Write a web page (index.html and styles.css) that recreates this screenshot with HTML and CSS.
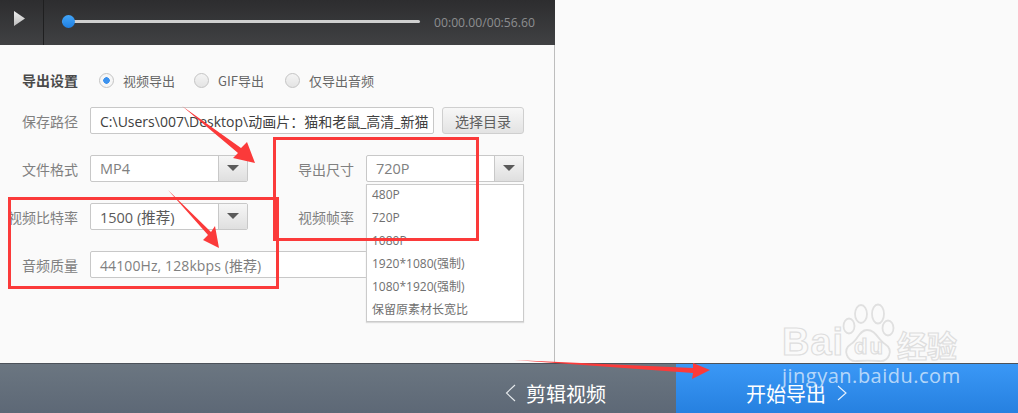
FILE: index.html
```html
<!DOCTYPE html>
<html lang="zh">
<head>
<meta charset="utf-8">
<title>导出设置</title>
<link rel="stylesheet" href="styles.css">
</head>
<body>
<div class="app">
  <div class="main">
    <section class="panel">
      <div class="player">
        <button class="play"><svg width="11" height="15" viewBox="0 0 11 15"><defs><linearGradient id="pg" x1="0" y1="0" x2="0" y2="1"><stop offset="0" stop-color="#eeeeee"/><stop offset="1" stop-color="#bcbcbc"/></linearGradient></defs><path d="M0 0L11 7.500L0 15Z" fill="url(#pg)"/></svg></button>
        <div class="track"><span class="thumb"></span></div>
        <span class="time">00:00.00/00:56.60</span>
      </div>
      <div class="form">
        <div class="row row-head">
          <span class="head">导出设置</span>
          <label class="radio on"><i></i>视频导出</label>
          <label class="radio r2"><i></i>GIF导出</label>
          <label class="radio r3"><i></i>仅导出音频</label>
        </div>
        <div class="row">
          <span class="label">保存路径</span>
          <div class="input path">C:\Users\007\Desktop\动画片：猫和老鼠_高清_新猫</div>
          <button class="browse">选择目录</button>
        </div>
        <div class="row">
          <span class="label">文件格式</span>
          <div class="select short muted"><span>MP4</span><b class="caret"></b></div>
          <span class="label label-r">导出尺寸</span>
          <div class="select right muted"><span>720P</span><b class="caret"></b></div>
        </div>
        <div class="row">
          <span class="label over">视频比特率</span>
          <div class="select short"><span>1500 (推荐)</span><b class="caret"></b></div>
          <span class="label label-r">视频帧率</span>
        </div>
        <div class="row">
          <span class="label">音频质量</span>
          <div class="input audio">44100Hz, 128kbps (推荐)</div>
        </div>
      </div>
    </section>
    <aside class="blank"></aside>
  </div>
  <footer class="bar">
    <div class="back">
      <svg class="chev" width="11" height="18" viewBox="0 0 11 18"><path d="M10 1L1.500 9L10 17" fill="none" stroke="#e8ecef" stroke-width="1.1"/></svg>
      <span>剪辑视频</span>
    </div>
    <div class="start">
      <span>开始导出</span>
      <svg class="chev" width="10" height="16" viewBox="0 0 10 16"><path d="M1 1L9 8L1 15" fill="none" stroke="#e8f2fd" stroke-width="1.1"/></svg>
    </div>
  </footer>

  <ul class="menu">
    <li>480P</li><li>720P</li><li>1080P</li><li>1920*1080(强制)</li><li>1080*1920(强制)</li><li>保留原素材长宽比</li>
  </ul>

  <div class="mark">
    <svg class="paw" width="60" height="60" viewBox="0 0 60 60" fill="#fafafa" stroke="#e0e0e0" stroke-width="1.8">
      <ellipse cx="23" cy="11" rx="6" ry="9"/>
      <ellipse cx="40" cy="11" rx="6" ry="9.500"/>
      <ellipse cx="11" cy="23" rx="5.500" ry="7.500"/>
      <ellipse cx="50" cy="25" rx="5.500" ry="7.500"/>
      <path d="M29 27C21 27 20 37 13 41C4 47 9 59 19 58C25 57.500 34 57.500 41 58C51 59 56 47 47 41C40 37 38 27 29 27Z"/>
    </svg>
    <span class="mk-bai">Bai</span>
    <span class="mk-du">du</span>
    <span class="mk-cn">经验</span>
    <span class="mk-url">jingyan.baidu.com</span>
  </div>

  <div class="redbox box-a"></div>
  <div class="redbox box-b"></div>
  <svg class="arrows" width="1018" height="413" viewBox="0 0 1018 413" fill="#fb3a3a">
    <path d="M182 106L241 148L247 142L255 163L233 158L238 153Z"/>
    <path d="M168 190L211 232L215 226L219 248L203 240L208 235Z"/>
    <path d="M514 360L693 368L693 363L710 370L692 379L693 373Z"/>
  </svg>
</div>
</body>
</html>
```
FILE: styles.css
```css
* { box-sizing: border-box; }
html, body { margin: 0; padding: 0; }
body {
  width: 1018px;
  height: 413px;
  overflow: hidden;
  font-family: "Noto Sans CJK SC", "Open Sans", sans-serif;
  background: #fafafa;
}
.app { position: relative; width: 1018px; height: 413px; display: flex; flex-direction: column; }
.main { display: flex; height: 363px; }
.panel { width: 555px; display: flex; flex-direction: column; background: #fafafa; }
.blank { flex: 1; background: #fafafa; }

.player {
  height: 45px;
  flex: none;
  display: flex;
  align-items: center;
  background: linear-gradient(#2d2d2f, #404143);
}
.play {
  width: 44px;
  height: 45px;
  padding: 0 0 8px 14px;
  border: 0;
  border-right: 1px solid #1f1f20;
  background: none;
  display: flex;
  align-items: center;
  justify-content: flex-start;
}
.track {
  position: relative;
  width: 358px;
  height: 3px;
  margin: 0 0 2px 18px;
  border-radius: 2px;
  background: #cfcfcf;
}
.thumb {
  position: absolute;
  left: 0;
  top: -5px;
  width: 13px;
  height: 13px;
  border-radius: 50%;
  background: linear-gradient(#42a5f8, #1f7fe2);
}
.time {
  margin: 0 0 1px 14px;
  font-family: "Open Sans", sans-serif;
  font-size: 12.200px;
  color: #8d8e90;
  white-space: nowrap;
}

.form { flex: 1; padding: 22px 0 0 22px; border-right: 1px solid #bdbdbd; }
.row { display: flex; align-items: center; height: 27px; margin-bottom: 21px; font-size: 14px; color: #808080; }
.row-head { height: 26px; margin-bottom: 14px; font-size: 13px; }
.head { width: 56px; font-size: 14px; font-weight: 700; color: #4a4a4a; }
.radio { display: flex; align-items: center; margin-left: 21px; color: #666; }
.radio i {
  width: 15px;
  height: 15px;
  margin-right: 9px;
  border: 1px solid #c4c4c4;
  border-radius: 50%;
  background: linear-gradient(#f4f4f4, #e4e4e4);
}
.radio.on i { background: radial-gradient(circle, #3c92ee 0 3px, #f6f6f6 3.500px); }
.r2 { margin-left: 19px; }

.label { width: 56px; flex: none; white-space: nowrap; color: #808080; }
.over { display: flex; justify-content: flex-end; }
.label-r { margin-left: 50px; }
.input, .select {
  height: 27px;
  margin-left: 12px;
  border: 1px solid #c8c8c8;
  border-radius: 2px;
  background: #fff;
  display: flex;
  align-items: center;
  font-family: "Open Sans", "Noto Sans CJK SC", sans-serif;
  color: #5a5a5a;
  white-space: nowrap;
  overflow: hidden;
}
.input { padding-left: 9px; font-size: 14px; }
.path { width: 344px; color: #404040; }
.audio { width: 434px; color: #808080; letter-spacing: 0.100px; }
.browse {
  width: 82px;
  height: 27px;
  margin-left: 8px;
  border: 1px solid #cfcfcf;
  border-radius: 3px;
  background: linear-gradient(#f7f7f7, #e3e3e3);
  font: 14px "Noto Sans CJK SC", sans-serif;
  color: #606060;
  padding: 0;
}
.select { justify-content: space-between; padding-left: 9px; font-size: 14.500px; }
.short { width: 158px; }
.right { width: 158px; margin-left: 12px; }
.muted { color: #808080; }
.caret {
  width: 30px;
  height: 27px;
  margin-right: -1px;
  border: 1px solid #c8c8c8;
  border-width: 0 0 0 1px;
  background: linear-gradient(#f7f7f7, #dedede);
  position: relative;
  flex: none;
}
.caret::after {
  content: "";
  position: absolute;
  left: 8px;
  top: 10px;
  border: 6px solid transparent;
  border-top: 6px solid #5a5a5a;
  border-bottom: 0;
}

.menu {
  position: absolute;
  left: 366px;
  top: 184px;
  width: 158px;
  height: 138px;
  margin: 0;
  padding: 0;
  list-style: none;
  background: #fff;
  border: 1px solid #cbcbcb;
  box-shadow: 0 1px 1px #ddd;
  font-family: "Open Sans", "Noto Sans CJK SC", sans-serif;
  font-size: 12px;
  color: #707070;
}
.menu li { height: 23px; line-height: 19px; padding-left: 5px; }

.bar { display: flex; height: 50px; border-top: 1px solid #4c525a; }
.back, .start { display: flex; align-items: center; font-size: 20px; color: #fff; padding-top: 9px; }
.back {
  width: 676px;
  justify-content: flex-end;
  padding-right: 70px;
  gap: 10px;
  background: linear-gradient(#6b7681, #5d6876);
}
.start {
  flex: 1;
  padding-left: 70px;
  gap: 11px;
  background: linear-gradient(#3a98f6, #2680e0);
}

.mark { position: absolute; left: 0; top: 0; width: 1018px; height: 413px; pointer-events: none; }
.paw { position: absolute; left: 838px; top: 303px; }
.mk-bai, .mk-du, .mk-cn, .mk-url { position: absolute; white-space: nowrap; line-height: 1; }
.mk-bai, .mk-du, .mk-cn {
  font-family: "Liberation Sans", sans-serif;
  font-weight: 700;
  color: #fafafa;
  -webkit-text-stroke: 1.200px #dedede;
}
.mk-bai { left: 782px; top: 323px; font-size: 38px; letter-spacing: 1px; }
.mk-du { left: 854px; top: 336px; font-size: 22px; letter-spacing: 2px; }
.mk-cn { left: 897px; top: 329px; font-size: 30px; font-family: "Noto Sans CJK SC", sans-serif; }
.mk-url {
  left: 782px;
  top: 366px;
  font-family: "Open Sans", sans-serif;
  font-size: 20px;
  letter-spacing: 0.500px;
  color: rgba(255, 255, 255, .65);
}

.redbox { position: absolute; border: 3px solid #fb3a3a; }
.box-a { left: 273px; top: 137px; width: 206px; height: 104px; }
.box-b { left: 8px; top: 197px; width: 271px; height: 92px; }
.arrows { position: absolute; left: 0; top: 0; pointer-events: none; }
```
